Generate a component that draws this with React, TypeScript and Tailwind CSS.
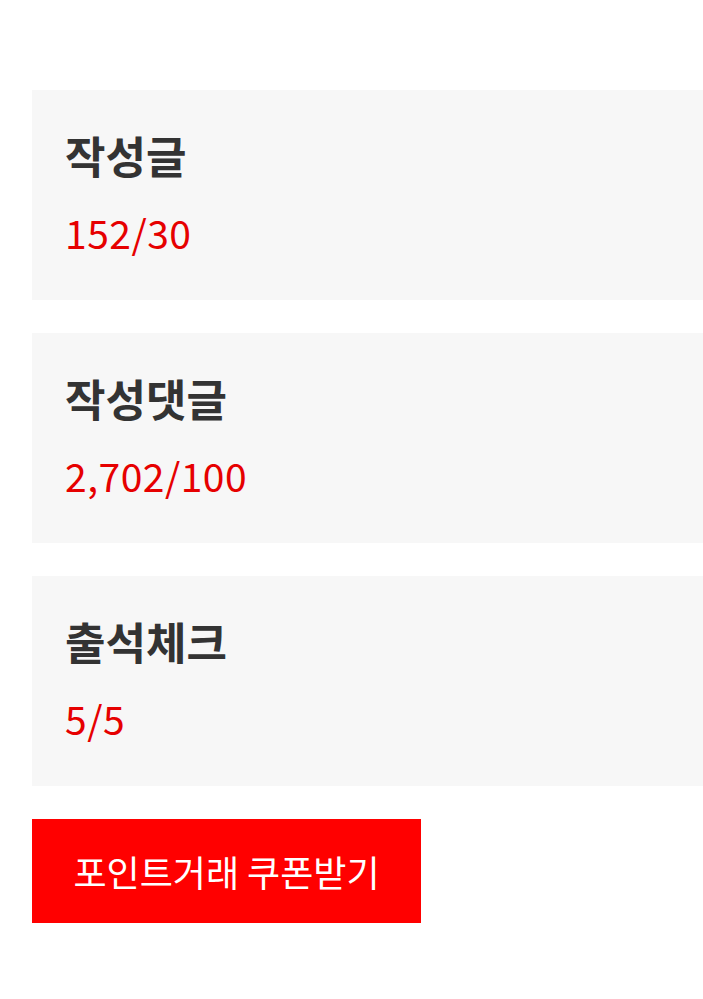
import React from "react";

const items = [
  { title: "작성글", value: "152/30" },
  { title: "작성댓글", value: "2,702/100" },
  { title: "출석체크", value: "5/5" },
];

export default function App() {
  return (
    <div
      className="w-[703px] h-[999px] bg-white pt-[90px] pl-[32px] flex flex-col gap-[33px]"
      style={{ fontFamily: '"Noto Sans CJK KR", "Noto Sans", sans-serif' }}
    >
      {items.map((it) => (
        <div key={it.title} className="h-[210px] bg-[#f7f7f7] pl-[33px] pt-[39px] flex flex-col">
          <div className="text-[44px] leading-[52px] font-bold text-[#333333] tracking-[0px]">{it.title}</div>
          <div className="text-[39px] leading-[48px] mt-[27px] text-[#e60000] tracking-[0.5px]">{it.value}</div>
        </div>
      ))}
      <div className="w-[389px] h-[104px] bg-[#ff0000] flex items-center justify-center text-white text-[36px] tracking-[0px]">
        포인트거래 쿠폰받기
      </div>
    </div>
  );
}
